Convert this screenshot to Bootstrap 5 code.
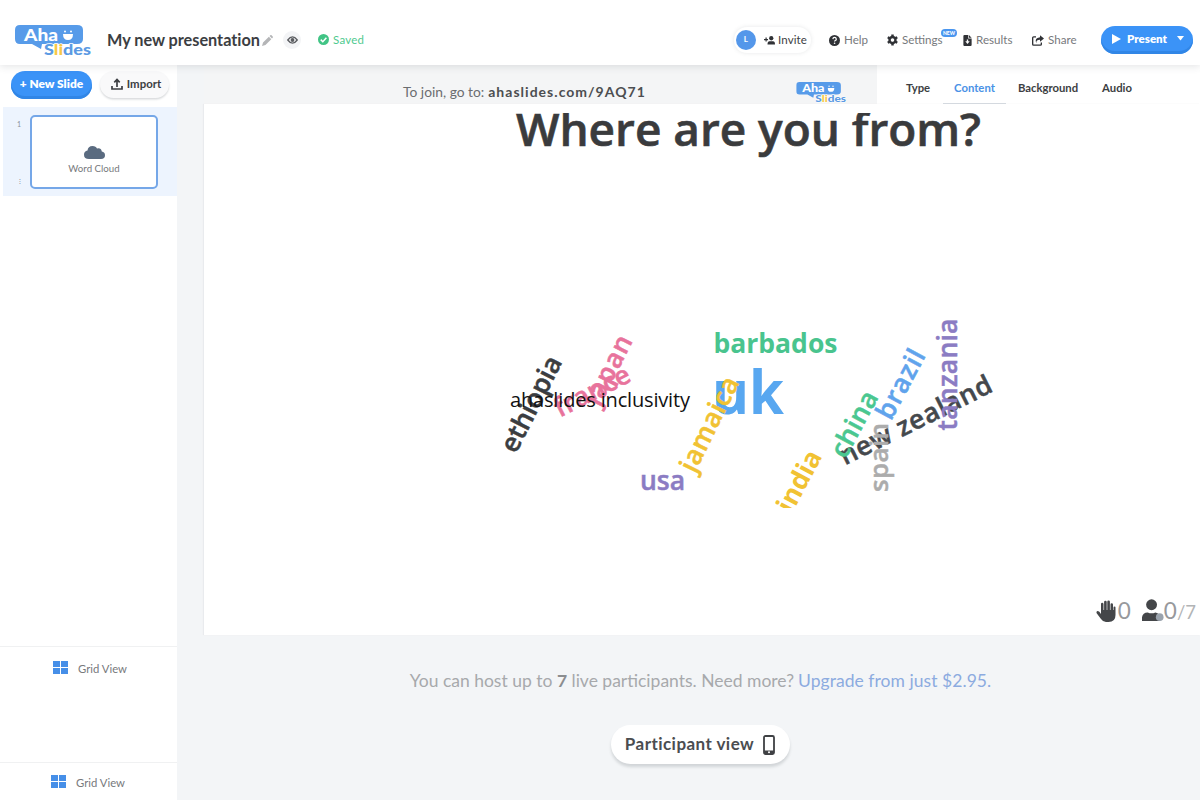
<!DOCTYPE html>
<html lang="en">
<head>
<meta charset="utf-8">
<meta name="viewport" content="width=device-width, initial-scale=1">
<title>My new presentation</title>
<link href="https://cdn.jsdelivr.net/npm/bootstrap@5.3.0/dist/css/bootstrap.min.css" rel="stylesheet">
<style>
body{font-family:Lato,"Noto Sans",sans-serif;color:#3c3e42;background:#fff;height:800px;overflow:hidden;line-height:1.2}
svg{display:block;flex:none}
.topbar{height:65px;padding:15px 7px 0 15px;position:relative;z-index:2;box-shadow:0 2px 7px rgba(60,70,80,.13)}
.doc-title{font-size:16.3px;font-weight:700;letter-spacing:-.03px;margin-left:15px;width:155px}
.eye{width:18px;height:18px;background:#f3f4f6}
.saved{color:#4fca8f;font-size:11.5px;letter-spacing:.25px;gap:4px;margin-left:17px}
.tool{font-size:11.6px;gap:4px;position:relative;color:#77797c}
.tool svg{color:#303236}
.invite{width:77px;height:26px;padding-left:2px;margin-right:18px;font-size:11.5px;letter-spacing:.1px;box-shadow:0 0 4px rgba(60,70,80,.13)}
.avatar{width:20px;height:20px;background:#5497ea;color:#fff;font-size:8px;font-weight:700}
.w-help{width:58px}.w-settings{width:76px}.w-results{width:69px}.w-share{width:69px}
.new-tag{position:absolute;left:54px;top:-4px;width:16px;height:8px;background:#4a96ef;color:#fff;font-size:5px;line-height:8px;font-weight:900;text-align:center}
.pill-blue{background:#3b93f7;color:#fff;font-weight:800;box-shadow:inset 0 -3px #3186e6}
.present{width:92px;height:28px;font-size:11.5px;padding:0 9px 3px 11px}
.new-slide{width:81px;height:28px;font-size:11.9px;padding-bottom:2px}
.import{width:69px;height:27px;font-size:11.4px;font-weight:700;background:#f9f9fa;gap:4px;padding:0 0 1px 3px;box-shadow:0 1.5px 2px rgba(60,70,80,.2)}
.side{width:177px}
.side-top{height:42px;padding:6px 0 0 11px;gap:8px}
.slide-row{height:89px;background:#edf4fe;padding:8px 0 0 13px;margin-left:3px}
.slide-no{width:14px;font-size:7px;color:#8b919c;padding:5px 0 3px 1px;height:73px}
.thumb{width:128px;height:74px;border:2px solid #75a7e8;border-radius:5px;background:#fff;font-size:9.7px;color:#77797c;padding-top:29px;gap:4px}
.grid-row{border-top:1px solid #f0f1f2;font-size:11.3px;color:#77797c;gap:10px}
.grid-row span{padding-top:1px}
.grid-a{height:116px;padding:14px 0 0 53px}
.grid-b{height:38px;padding:12px 0 0 51px}
.stage{background:#f3f5f7;min-width:0}
.joinbar{height:39px;background:#f4f5f6;margin-left:27px;padding:0 30px 0 199px;color:#6b6d70}
.joinbar .go{font-size:13.8px}
.joinbar .url{font-size:14px;letter-spacing:1.02px;color:#4c4e51}
.tab-strip{width:323px;background:#fff;font-size:11.3px;font-weight:700}
.tab-strip span{text-align:center;padding-top:16px;height:39px}
.tab-strip .tab-first{width:66px;padding-left:16px}
.tab-on{color:#4a92e6;border-bottom:1px solid #cfd5dd}
.canvas{height:531px;background:#fff;margin-left:27px;position:relative;box-shadow:-1px 0 1px #e9ebee}
.counters{position:absolute;right:4px;bottom:11px;font-size:22.500px;color:#97999c}
.cloud{font-family:"Open Sans","Noto Sans",sans-serif;font-weight:600;font-size:26.5px;text-anchor:middle}
.host{font-size:17.5px;color:#a7a9ac;margin-top:35px;gap:4px;padding-left:24px}
.host b{color:#8b8d90}
.host .up{color:#8cabe0;letter-spacing:.05px}
.pview{width:179px;height:39px;background:#fff;font-size:17px;font-weight:700;letter-spacing:.45px;color:#4b4d50;margin-top:34px;margin-left:23px;gap:9px;box-shadow:0 3px 3px rgba(60,70,80,.18)}
</style>
</head>
<body class="d-flex flex-column text-nowrap">
<svg width="0" height="0" class="position-absolute"><defs>
<symbol id="logo" viewBox="0 0 77 32"><path d="M5 0h57q6 0 6 5v9q0 5-6 5H27v0l-1 5-9-5H5q-5 0-5-5V5q0-5 5-5z" fill="#579be9"/><g font-family="Lato" font-weight="900"><text x="9" y="15.500" font-size="16.500" fill="#fff" textLength="34" lengthAdjust="spacingAndGlyphs">Aha</text><text x="29" y="30.300" font-size="15.500" fill="#5b9ae3" stroke="#fff" stroke-width="1.500" paint-order="stroke" textLength="47" lengthAdjust="spacingAndGlyphs">S<tspan fill="#f7c948">li</tspan>des</text></g><path d="M48 9h10q0 6-5 6t-5-6z" fill="#fff"/><circle cx="50" cy="6.500" r="1" fill="#fff"/><circle cx="56" cy="6.500" r="1" fill="#fff"/></symbol>
<symbol id="squares" viewBox="0 0 15 13"><path d="M0 0h7v6H0zM8 0h7v6H8zM0 7h7v6H0zM8 7h7v6H8z" fill="#468fe8"/></symbol></defs></svg>
<header class="topbar bg-white d-flex align-items-start">
<div class="pt-2"><svg width="77" height="34" viewBox="0 -2 77 34"><use href="#logo" width="77" height="32"/></svg></div>
<div class="d-flex align-items-center flex-grow-1" style="height:50px">
<span class="doc-title">My new presentation</span>
<svg width="11" height="11" viewBox="0 0 16 16" fill="#b4b5b7"><path d="M0 16l1.500-5L10 2.500 13.500 6 5 14.500zM11 1.500l1-1q1-1 2 0L15.500 2q1 1 0 2l-1 1z"/></svg>
<span class="eye rounded-circle d-flex align-items-center justify-content-center" style="margin-left:10px"><svg width="11" height="8" viewBox="0 0 22 16"><path d="M1.500 8Q11-4.500 20.500 8 11 20.500 1.500 8z" fill="none" stroke="#5a5c60" stroke-width="2.600"/><circle cx="11" cy="8" r="3.800" fill="#5a5c60"/></svg></span>
<span class="saved d-flex align-items-center"><svg width="11" height="11" viewBox="0 0 16 16"><circle cx="8" cy="8" r="8" fill="#41c485"/><path d="M4 8.200l3 3 5.200-5.700" fill="none" stroke="#fff" stroke-width="2.200"/></svg>Saved</span>
</div>
<nav class="d-flex align-items-center" style="height:50px">
<span class="invite rounded-pill d-flex align-items-center"><span class="avatar rounded-circle d-flex align-items-center justify-content-center">L</span><svg class="ms-2" style="margin-right:3px" width="11" height="9" viewBox="0 0 22 18" fill="#303236"><circle cx="14.500" cy="4.500" r="4.300"/><path d="M7 17q0-6.500 4-6.500h7q4 0 4 6.500zM3 3h2.400v3H8v2.400H5.400V11H3V8.400H0V6h3z"/></svg>Invite</span>
<span class="tool w-help d-flex align-items-center"><svg width="11" height="11" viewBox="0 0 16 16"><circle cx="8" cy="8" r="8" fill="currentColor"/><path d="M5.600 6q.3-2.500 2.500-2.500T10.600 6q0 1.300-1.500 2-1 .5-1 1.500" fill="none" stroke="#fff" stroke-width="1.800"/><circle cx="8.100" cy="12" r="1.200" fill="#fff"/></svg>Help</span>
<span class="tool w-settings d-flex align-items-center"><svg width="11" height="12" viewBox="-8 -8 16 16"><circle r="4.300" fill="none" stroke="currentColor" stroke-width="3.600"/><path d="M0-8v3.500M0 8V4.500M-6.900-4l3 1.700M6.900 4l-3-1.700M-6.900 4l3-1.700M6.900-4l-3 1.700" stroke="currentColor" stroke-width="3.600"/></svg>Settings<span class="new-tag rounded-pill">NEW</span></span>
<span class="tool w-results d-flex align-items-center"><svg width="9" height="11" viewBox="0 0 12 16"><path d="M1.500 0H7v5h5v9.500q0 1.500-1.500 1.500h-9Q0 16 0 14.500v-13Q0 0 1.500 0zM8 0l4 4H8z" fill="currentColor"/><path d="M6 6.500V10" stroke="#fff" stroke-width="2"/><path d="M2.800 9h6.400L6 13z" fill="#fff"/></svg>Results</span>
<span class="tool w-share d-flex align-items-center"><svg width="12" height="11" viewBox="0 0 18 16"><path d="M6 2.500H2.500Q1 2.500 1 4v9.500Q1 15 2.500 15h10q1.500 0 1.500-1.500V11" fill="none" stroke="currentColor" stroke-width="2"/><path d="M12 0l6 5-6 5V7Q6 7 6.500 12 3 4 12 3z" fill="currentColor"/></svg>Share</span>
<span class="pill-blue present rounded-pill d-flex align-items-center justify-content-between"><svg width="9" height="10" viewBox="0 0 9 10"><path d="M0 0l9 5-9 5z" fill="#fff"/></svg><span class="me-1">Present</span><svg width="7" height="5" viewBox="0 0 7 5"><path d="M0 0h7L3.500 4.500z" fill="#fff"/></svg></span>
</nav>
</header>
<div class="d-flex flex-grow-1">
<aside class="side d-flex flex-column">
<div class="side-top d-flex"><span class="pill-blue new-slide rounded-pill d-flex align-items-center justify-content-center">+ New Slide</span>
<span class="import rounded-pill d-flex align-items-center justify-content-center"><svg width="12" height="12" viewBox="0 0 12 12"><path d="M6 9V2M3.300 4.300L6 1.500l2.700 2.800M1 8v3h10V8" fill="none" stroke="#3c3e42" stroke-width="1.700"/></svg>Import</span></div>
<div class="slide-row d-flex"><span class="slide-no d-flex flex-column justify-content-between"><span>1</span><span style="padding-left:2px">⁝</span></span>
<div class="thumb d-flex flex-column align-items-center"><svg width="21" height="13" viewBox="0 0 21 13"><path d="M5 13Q0 13 0 8.700 0 5.200 3.500 4.500 4 0 8.500 0 12 0 13 2.500 17 1.500 17.800 5.500 21 6 21 9.200 21 13 17 13z" fill="#5a6b80"/></svg>Word Cloud</div></div>
<div class="grid-row grid-a d-flex align-items-start mt-auto"><svg width="15" height="13"><use href="#squares"/></svg><span>Grid View</span></div>
<div class="grid-row grid-b d-flex align-items-start"><svg width="15" height="13"><use href="#squares"/></svg><span>Grid View</span></div>
</aside>
<main class="stage flex-grow-1">
<div class="d-flex">
<div class="joinbar flex-grow-1 d-flex align-items-center pt-3"><span class="go">To join, go to:</span><b class="url ms-1">ahaslides.com/9AQ71</b><svg class="ms-auto" width="51" height="21" viewBox="0 0 77 32"><use href="#logo" width="77" height="32"/></svg></div>
<div class="tab-strip d-flex"><span class="tab-first">Type</span><span class="tab-on" style="width:63px">Content</span><span style="width:84px">Background</span><span style="width:54px">Audio</span></div>
</div>
<section class="canvas">
<svg class="cloud" width="996" height="531" viewBox="204 104 996 531">
<clipPath id="top"><path d="M204 113h996v395H204z"/></clipPath>
<g clip-path="url(#top)">
<text x="748.500" y="146" font-size="46" textLength="465" fill="#3a3b3d" stroke="#3a3b3d" stroke-width=".6">Where are you from?</text>
<g stroke-width=".5">
<text transform="translate(533 405) rotate(-63)" y="7" textLength="104" fill="#3b3d40" stroke="#3b3d40">ethiopia</text>
<g fill="#e8739c" stroke="#e8739c"><text transform="translate(610 371) rotate(-63)" y="7" textLength="75">japan</text>
<text transform="translate(593 393) rotate(-27)" y="7" textLength="82">france</text></g>
<text x="775.500" y="353" textLength="124" lengthAdjust="spacingAndGlyphs" fill="#49c48e" font-weight="700">barbados</text>
<text x="748" y="414" font-size="60" textLength="72" lengthAdjust="spacingAndGlyphs" fill="#58a7f0" font-weight="700">uk</text>
<text transform="translate(711 425) rotate(-64)" y="7" textLength="102" fill="#f1c233" stroke="#f1c233">jamaica</text>
<text x="662.500" y="490" textLength="45" fill="#8b7cc3" stroke="#8b7cc3">usa</text>
<text transform="translate(801 482) rotate(-62)" y="7" textLength="66" lengthAdjust="spacingAndGlyphs" fill="#f1c233" font-weight="700">india</text>
<text transform="translate(916.500 422) rotate(-26.500)" y="7" textLength="167" fill="#44484c" stroke="#44484c">new zealand</text>
<text transform="translate(856 425) rotate(-62)" y="7" textLength="71" fill="#4ac790" stroke="#4ac790">china</text>
<text transform="translate(902.500 385) rotate(-62)" y="7" textLength="75" fill="#60a3ec" stroke="#60a3ec">brazil</text>
<text transform="translate(949.500 374.500) rotate(-90)" y="7" textLength="112" fill="#8b7cc3" stroke="#8b7cc3">tanzania</text>
<text transform="translate(881 457.500) rotate(-90)" y="7" textLength="69" font-size="26" fill="#acacac" stroke="#acacac">spain</text></g>
<text x="600" y="406.500" font-size="20" font-weight="400" textLength="180" fill="#111">ahaslides inclusivity</text>
</g></svg>
<div class="counters d-flex align-items-center"><svg width="20" height="22" viewBox="0 0 20 22" fill="#444649"><path d="M5 12V4q0-1.200 1.200-1.200T7.500 4v6h.6V2q0-1.300 1.300-1.300T10.700 2v8h.6V1.800q0-1.300 1.300-1.300t1.300 1.300V10h.6V4.500q0-1.300 1.200-1.300T17 4.500V10h.5V7.500q0-1 1-1t1 1V15q0 7-7 7H10q-3 0-5-3l-4.500-6Q0 11.500 1.500 11T5 14z"/></svg><span style="margin-left:2px;width:24px">0</span><svg width="22" height="23" viewBox="0 0 23 24" fill="#444649"><circle cx="10" cy="6" r="5.700"/><path d="M0 23q-1-9 6-9 4 2 8 0 6 1 5 9z"/><circle cx="18.500" cy="19" r="4" fill="#9aa3ad"/></svg><span>0<span style="font-size:18.500px;color:#b2b4b6">/7</span></span></div>
</section>
<div class="host d-flex justify-content-center"><span>You can host up to <b>7</b> live participants. Need more?</span><span class="up">Upgrade from just $2.95.</span></div>
<div class="d-flex justify-content-center"><span class="pview rounded-pill d-flex align-items-center justify-content-center">Participant view<svg width="12" height="20" viewBox="0 0 12 20"><rect x="1" y="1" width="10" height="18" rx="1.500" fill="none" stroke="#3f4144" stroke-width="1.800"/><path d="M1 15.500h10V19H1z" fill="#3f4144"/><circle cx="6" cy="17.300" r="1" fill="#fff"/></svg></span></div>
</main>
</div>
<script src="https://cdn.jsdelivr.net/npm/bootstrap@5.3.0/dist/js/bootstrap.bundle.min.js"></script>
</body>
</html>
